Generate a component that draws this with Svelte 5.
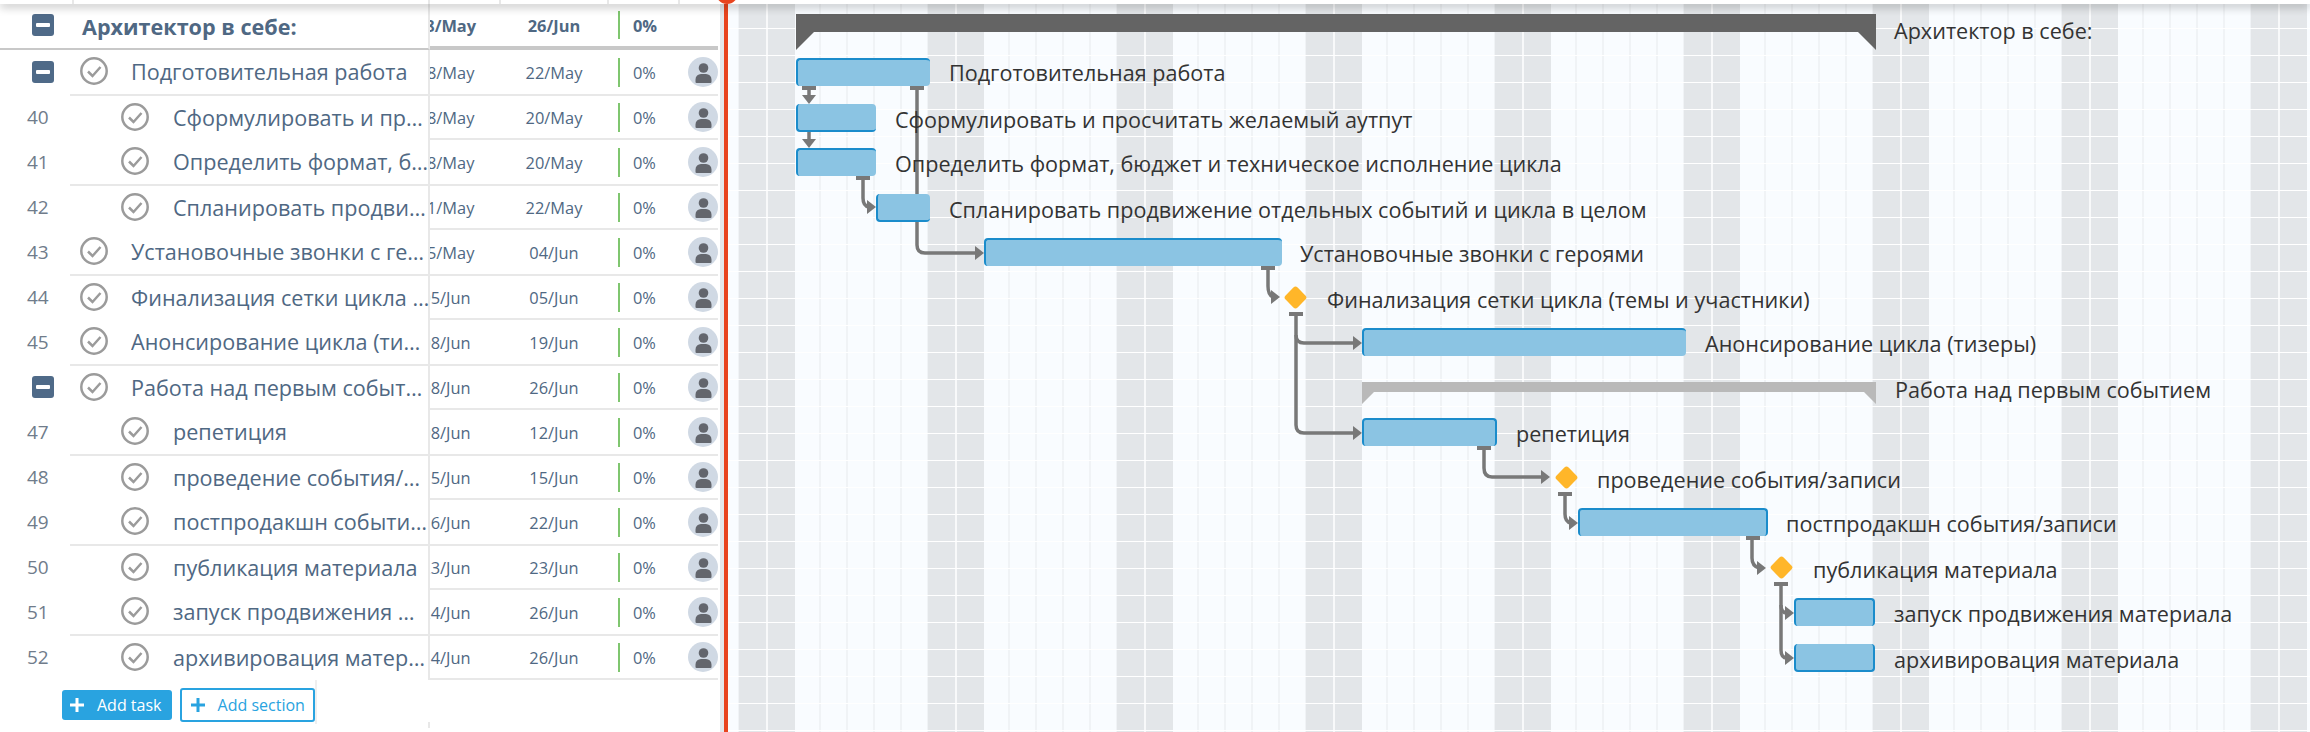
<script>
  const ORIGIN = 728;
  const rowTop = (i) => 58 + 45 * i + (i % 2);

  const rows = [
    { num: "", group: true, level: 1, name: "Подготовительная работа", start: "18/May", end: "22/May" },
    { num: 40, level: 2, name: "Сформулировать и просчитать желаемый аутпут", start: "18/May", end: "20/May" },
    { num: 41, level: 2, name: "Определить формат, бюджет и техническое исполнение цикла", start: "18/May", end: "20/May" },
    { num: 42, level: 2, name: "Спланировать продвижение отдельных событий и цикла в целом", start: "21/May", end: "22/May" },
    { num: 43, level: 1, name: "Установочные звонки с героями", start: "25/May", end: "04/Jun" },
    { num: 44, level: 1, name: "Финализация сетки цикла (темы и участники)", start: "05/Jun", end: "05/Jun" },
    { num: 45, level: 1, name: "Анонсирование цикла (тизеры)", start: "08/Jun", end: "19/Jun" },
    { num: "", group: true, level: 1, name: "Работа над первым событием", start: "08/Jun", end: "26/Jun" },
    { num: 47, level: 2, name: "репетиция", start: "08/Jun", end: "12/Jun" },
    { num: 48, level: 2, name: "проведение события/записи", start: "15/Jun", end: "15/Jun" },
    { num: 49, level: 2, name: "постпродакшн события/записи", start: "16/Jun", end: "22/Jun" },
    { num: 50, level: 2, name: "публикация материала", start: "23/Jun", end: "23/Jun" },
    { num: 51, level: 2, name: "запуск продвижения материала", start: "24/Jun", end: "26/Jun" },
    { num: 52, level: 2, name: "архивировация материала", start: "24/Jun", end: "26/Jun" },
  ];

  const bars = [
    { row: 0, from: 796, to: 930 },
    { row: 1, from: 796, to: 876 },
    { row: 2, from: 796, to: 876 },
    { row: 3, from: 876, to: 930 },
    { row: 4, from: 984, to: 1282 },
    { row: 6, from: 1362, to: 1686 },
    { row: 8, from: 1362, to: 1497, edge: true },
    { row: 10, from: 1578, to: 1768, edge: true },
    { row: 12, from: 1794, to: 1875, edge: true },
    { row: 13, from: 1794, to: 1875, edge: true },
  ];

  const diamonds = [
    { x: 1295, y: 297 },
    { x: 1566, y: 477 },
    { x: 1781, y: 567 },
  ];

  const labels = [
    { text: "Архитектор в себе:", x: 1894, y: 17 },
    { text: "Подготовительная работа", x: 949, y: 59 },
    { text: "Сформулировать и просчитать желаемый аутпут", x: 895, y: 106 },
    { text: "Определить формат, бюджет и техническое исполнение цикла", x: 895, y: 150 },
    { text: "Спланировать продвижение отдельных событий и цикла в целом", x: 949, y: 196 },
    { text: "Установочные звонки с героями", x: 1300, y: 240 },
    { text: "Финализация сетки цикла (темы и участники)", x: 1327, y: 286 },
    { text: "Анонсирование цикла (тизеры)", x: 1705, y: 330 },
    { text: "Работа над первым событием", x: 1895, y: 376 },
    { text: "репетиция", x: 1516, y: 420 },
    { text: "проведение события/записи", x: 1597, y: 466 },
    { text: "постпродакшн события/записи", x: 1786, y: 510 },
    { text: "публикация материала", x: 1813, y: 556 },
    { text: "запуск продвижения материала", x: 1894, y: 600 },
    { text: "архивировация материала", x: 1894, y: 646 },
  ];

  const links = [
    "M809 88V96",
    "M809 132V140",
    "M863 178V198Q863 206 869 207",
    "M917 88V245Q917 253 925 253H976",
    "M1268 268V286Q1268 295 1273 297",
    "M1296 314V425Q1296 433 1304 433H1354",
    "M1296 335Q1296 343 1304 343H1354",
    "M1484 448V468Q1484 477 1492 477H1542",
    "M1565 494V514Q1565 522 1571 523",
    "M1752 538V558Q1752 566 1759 568",
    "M1781 584V650Q1781 658 1787 658",
    "M1781 605Q1781 613 1787 613",
  ];
  const caps = [[809, 88], [917, 88], [863, 178], [1268, 268], [1296, 314], [1484, 448], [1565, 494], [1753, 538], [1781, 584]];
  const downHeads = [[809, 104], [809, 148]];
  const rightHeads = [[876, 207], [984, 253], [1280, 297], [1362, 343], [1362, 433], [1550, 477], [1578, 523], [1766, 568], [1794, 613], [1794, 658]];
</script>

<div class="page">
  <div class="topbar">
    <span style="width: 74px"></span>
    <span style="width: 356px"></span>
    <span style="width: 71px"></span>
    <span style="width: 108px"></span>
    <span style="width: 71px"></span>
    <div class="knob"></div>
  </div>

  <div class="main">
    <div class="panel">
      <div class="row section">
        <div class="num">
          <span class="toggle"></span>
        </div>
        <div class="name">Архитектор в себе:</div>
        <div class="date start"><span>18/May</span></div>
        <div class="date">26/Jun</div>
        <div class="pct"><i></i>0%</div>
        <div></div>
      </div>

      <div class="rows">
        {#each rows as r}
          <div class="row">
            <div class="num">
              {#if r.group}
                <span class="toggle"></span>
              {:else}
                {r.num}
              {/if}
            </div>
            <div class="name level{r.level}">
              <svg class="check" viewBox="0 0 28 28" width="28" height="28">
                <circle cx="14" cy="14" r="12.7" />
                <path d="M8 14.5l4.5 4.5 8-9" />
              </svg>
              <span class="title">{r.name}</span>
            </div>
            <div class="date start"><span>{r.start}</span></div>
            <div class="date">{r.end}</div>
            <div class="pct"><i></i>0%</div>
            <div class="who">
              <svg class="avatar" viewBox="0 0 30 30" width="30" height="30">
                <circle class="face" cx="15" cy="15" r="15" />
                <circle class="shape" cx="15.5" cy="11" r="4.8" />
                <path class="shape" d="M7.5 25v-2.5a5.5 5.5 0 0 1 5.5-5.500h5a5.500 5.500 0 0 1 5.500 5.500V25a1 1 0 0 1-1 1h-14a1 1 0 0 1-1-1z" />
              </svg>
            </div>
          </div>
        {/each}
      </div>

      <div class="footer">
        <div class="actions">
          <button class="add solid">
            <svg viewBox="0 0 14 14" width="14" height="14"><path d="M7 0v14M0 7h14" /></svg>
            Add task
          </button>
          <button class="add outline">
            <svg viewBox="0 0 14 14" width="14" height="14"><path d="M7 0v14M0 7h14" /></svg>
            Add section
          </button>
        </div>
        <div class="stub"></div>
      </div>
    </div>

    <div class="divider"></div>

    <div class="timeline">
      <svg class="links" viewBox="{ORIGIN} 4 1582 728" width="1582" height="728">
        <polygon class="summary" points="796,14 1876,14 1876,50 1858,32 814,32 796,50" />
        <polygon class="summary light" points="1362,382 1876,382 1876,404 1864,392 1374,392 1362,404" />
        {#each links as d}
          <path class="link" {d} />
        {/each}
        {#each caps as [x, y]}
          <rect class="head" x={x - 7} y={y - 2} width="14" height="4" />
        {/each}
        {#each downHeads as [x, y]}
          <polygon class="head" points="{x - 7},{y - 9} {x + 7},{y - 9} {x},{y}" />
        {/each}
        {#each rightHeads as [x, y]}
          <polygon class="head" points="{x - 9},{y - 7} {x - 9},{y + 7} {x},{y}" />
        {/each}
      </svg>

      {#each bars as b}
        <div
          class="bar"
          class:lower={b.row % 2 === 1}
          class:edge={b.edge}
          style="left: {b.from - ORIGIN}px; top: {rowTop(b.row) - 4}px; width: {b.to - b.from}px"
        ></div>
      {/each}

      {#each diamonds as m}
        <div class="diamond" style="left: {m.x - ORIGIN - 8.5}px; top: {m.y - 4 - 8.5}px"></div>
      {/each}

      {#each labels as l}
        <div class="label" style="left: {l.x - ORIGIN}px; top: {l.y - 4}px">{l.text}</div>
      {/each}
    </div>
  </div>
</div>

<style>
  :global(body) {
    margin: 0;
    background: #fff;
  }

  .page {
    width: 2310px;
    height: 732px;
    display: flex;
    flex-direction: column;
    overflow: hidden;
    font-family: "Open Sans", "Noto Sans", sans-serif;
  }

  .topbar {
    position: relative;
    z-index: 3;
    flex: 0 0 4px;
    display: flex;
    background: #fff;
    box-shadow: 0 2px 10px rgba(0, 0, 0, 0.4);
  }
  .topbar span {
    box-sizing: border-box;
    border-right: 2px solid #e8e8e8;
  }
  .knob {
    position: absolute;
    left: 716px;
    top: -18px;
    width: 22px;
    height: 22px;
    border-radius: 50%;
    background: #e8441f;
  }

  .main {
    flex: 1;
    display: flex;
    min-height: 0;
  }

  .panel {
    flex: 0 0 720px;
    background: #fff;
  }

  .row {
    width: 718px;
    display: grid;
    grid-template-columns: 70px 360px 72px 107px 71px 38px;
    box-sizing: border-box;
    color: #4f6883;
  }
  .rows .row {
    height: 44px;
  }
  .rows .row:nth-child(odd) {
    height: 46px;
  }
  .rows .row:nth-child(odd) .name {
    border-bottom: 2px solid #e8e8e8;
  }
  .row > div {
    box-sizing: border-box;
    display: flex;
    align-items: center;
  }
  .row > div:nth-child(n + 3) {
    border-bottom: 2px solid #e8e8e8;
  }

  .num {
    justify-content: flex-start;
    padding-left: 27px;
    padding-bottom: 2px;
    font-size: 19px;
    color: #707c8b;
  }
  .toggle {
    position: relative;
    display: block;
    width: 22px;
    height: 22px;
    margin-left: 5px;
    border-radius: 3px;
    background: #4f6a88;
  }
  .toggle::after {
    content: "";
    position: absolute;
    left: 4px;
    top: 9px;
    width: 14px;
    height: 4px;
    border-radius: 1px;
    background: #fff;
  }

  .name {
    min-width: 0;
    gap: 24px;
    padding-bottom: 2px;
    font-size: 21.6px;
    border-right: 2px solid #e8e8e8;
  }
  .level1 {
    padding-left: 10px;
    gap: 23px;
  }
  .level2 {
    padding-left: 51px;
  }
  .title {
    min-width: 0;
    margin-right: -2px;
    overflow: hidden;
    white-space: nowrap;
    text-overflow: ellipsis;
  }
  .check {
    flex: none;
    fill: none;
    stroke: #9b9b9b;
    stroke-width: 2.5;
  }

  .date {
    justify-content: center;
    padding-right: 3px;
    font-size: 16.4px;
    white-space: nowrap;
  }
  .date.start {
    justify-content: flex-end;
    padding-right: 6px;
    overflow: hidden;
  }
  .date.start span {
    flex: none;
    width: 100px;
    text-align: center;
  }

  .pct {
    padding-left: 9px;
    font-size: 16.4px;
  }
  .pct i {
    display: block;
    width: 2px;
    height: 29px;
    margin-right: 13px;
    background: #7fc66f;
  }

  .who {
    justify-content: flex-end;
    overflow: hidden;
  }
  .avatar {
    flex: none;
  }
  .face {
    fill: #d0d9e4;
  }
  .shape {
    fill: #63666d;
  }

  .section {
    height: 46px;
  }
  .section .name {
    padding-left: 12px;
    padding-bottom: 0;
    font-weight: 700;
    border-bottom: 2px solid #c8c8c8;
  }
  .section .num {
    border-bottom: 2px solid #c8c8c8;
  }
  .section > div:nth-child(n + 3) {
    font-weight: 700;
    border-bottom: 4px solid #c8c8c8;
  }
  .section .pct i {
    height: 28px;
  }

  .footer {
    display: flex;
    height: 48px;
  }
  .actions {
    box-sizing: border-box;
    width: 317px;
    height: 44px;
    padding: 8px 0 0 62px;
    display: flex;
    align-items: flex-start;
    gap: 8px;
    border-right: 2px solid #efefef;
  }
  .add {
    box-sizing: border-box;
    display: flex;
    align-items: center;
    gap: 13px;
    padding: 0 0 0 8px;
    border-radius: 3px;
    font-family: inherit;
    font-size: 16px;
    white-space: nowrap;
  }
  .add svg {
    flex: none;
    fill: none;
    stroke: currentColor;
    stroke-width: 3;
  }
  .solid {
    width: 110px;
    height: 30px;
    margin-top: 2px;
    border: 0;
    background: #29a3e0;
    color: #fff;
  }
  .outline {
    width: 136px;
    height: 34px;
    border: 2px solid #29a3e0;
    padding-left: 9px;
    background: #fff;
    color: #29a3e0;
  }
  .stub {
    align-self: flex-end;
    width: 2px;
    height: 6px;
    margin-left: 111px;
    background: #e8e8e8;
  }

  .divider {
    flex: 0 0 4px;
    background: #e4e7eb;
    box-sizing: content-box;
    border-right: 4px solid #e8441f;
  }

  .timeline {
    position: relative;
    flex: 1;
    overflow: hidden;
    background-color: #f9fcff;
    background-image:
      linear-gradient(to bottom, #fff 0 1px, transparent 1px),
      linear-gradient(to right, transparent 27px, #f8f9fa 27px 29px, transparent 29px),
      linear-gradient(to right, #e3e6e9 0 56px, transparent 56px),
      linear-gradient(to right, #f0f3f6 0 2px, transparent 2px);
    background-size:
      100% 27px,
      189px 100%,
      189px 100%,
      27px 100%;
    background-position:
      0 -3px,
      11px 0,
      11px 0,
      10px 0;
  }

  .links {
    position: absolute;
    left: 0;
    top: 0;
  }
  .summary {
    fill: #646464;
  }
  .summary.light {
    fill: #b9b9b9;
  }
  .link {
    fill: none;
    stroke: #787878;
    stroke-width: 3.5;
  }
  .head {
    fill: #787878;
  }

  .bar {
    position: absolute;
    box-sizing: border-box;
    height: 28px;
    background: #8bc4e3;
    border-left: 2px solid #1b8ccb;
    border-top: 2px solid #1b8ccb;
    border-radius: 4px;
  }
  .bar.lower {
    border-top: 0;
    border-bottom: 2px solid #1b8ccb;
  }
  .bar.edge {
    border-right: 2px solid #1b8ccb;
  }

  .diamond {
    position: absolute;
    width: 17px;
    height: 17px;
    border-radius: 3px;
    background: #ffb629;
    transform: rotate(45deg);
  }

  .label {
    position: absolute;
    font-size: 21.6px;
    line-height: 28px;
    color: #333;
    white-space: nowrap;
  }
</style>
